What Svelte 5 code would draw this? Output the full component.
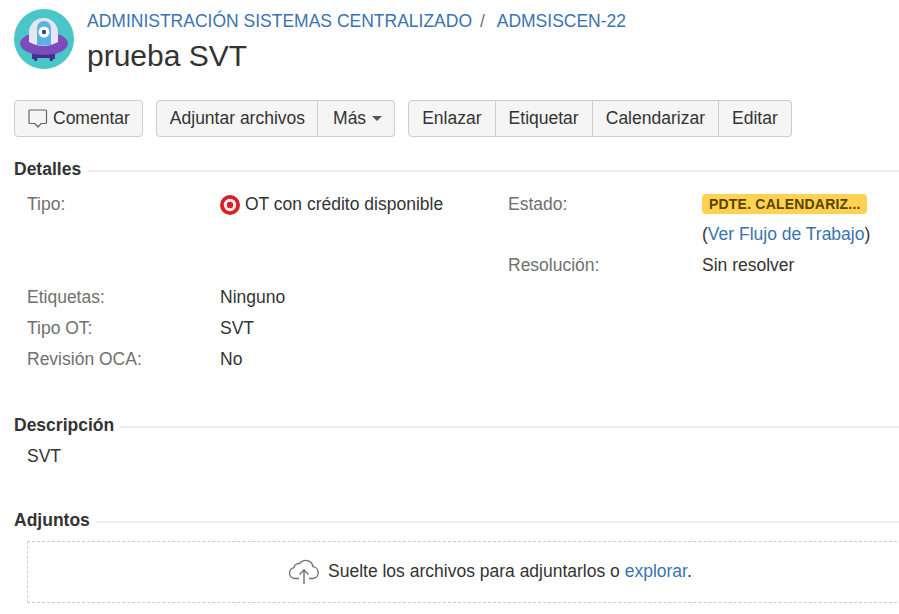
<script>
  const leftFields = [
    ['Etiquetas:', 'Ninguno'],
    ['Tipo OT:', 'SVT'],
    ['Revisión OCA:', 'No']
  ];
  const groupTwo = ['Enlazar', 'Etiquetar', 'Calendarizar', 'Editar'];
</script>

<div class="page">
  <header class="head">
    <svg class="avatar" viewBox="0 0 60 60" width="60" height="60">
      <circle cx="30" cy="30" r="30" fill="#4ac6c8" />
      <path d="M18 44h23v6h-2l-.500 2h-2.500l-.500-3h-12l-.500 3H20.500l-.500-2h-2z" fill="#3f3190" />
      <ellipse cx="30" cy="34.500" rx="24" ry="11.500" fill="#7d4bbb" />
      <path d="M15 33V23.500a14.500 14.500 0 0 1 29 0V33q-14.500 8-29 0z" fill="#e8e4f2" />
      <path d="M23 36V19a7 7 0 0 1 14 0v17q-7 1-14 0z" fill="#58b3e4" />
      <circle cx="30" cy="23" r="5.500" fill="#fff" />
      <circle cx="30" cy="23" r="2.200" fill="#2c4a8c" />
    </svg>
    <div class="titles">
      <div class="crumbs">
        <a href="#a">ADMINISTRACIÓN SISTEMAS CENTRALIZADO</a>
        <span class="sep">/</span>
        <a href="#b">ADMSISCEN-22</a>
      </div>
      <h1>prueba SVT</h1>
    </div>
  </header>

  <div class="toolbar">
    <div class="group">
      <button class="comment-btn">
        <svg viewBox="0 0 20 20" width="20" height="20">
          <path d="M2 1h15.500a1 1 0 0 1 1 1v11.500a1 1 0 0 1-1 1h-4.500l-3 3.500-3-3.500H2a1 1 0 0 1-1-1V2a1 1 0 0 1 1-1z" fill="none" stroke="#666" stroke-width="1.200" />
        </svg>
        Comentar
      </button>
    </div>
    <div class="group">
      <button class="attach-btn">Adjuntar archivos</button>
      <button class="more-btn">Más <span class="caret"></span></button>
    </div>
    <div class="group links">
      {#each groupTwo as label}
        <button>{label}</button>
      {/each}
    </div>
  </div>

  <section class="details">
    <h2><span>Detalles</span></h2>
    <div class="grid">
      <div class="label">Tipo:</div>
      <div class="value type">
        <svg viewBox="0 0 20 20" width="20" height="20">
          <circle cx="10" cy="10" r="10" fill="#d92027" />
          <circle cx="10" cy="10" r="6.200" fill="#f4f0f0" />
          <circle cx="10" cy="10" r="3.200" fill="#d92027" />
        </svg>
        OT con crédito disponible
      </div>
      <div class="label">Estado:</div>
      <div class="value"><span class="lozenge">PDTE. CALENDARIZ...</span></div>

      <div></div>
      <div></div>
      <div></div>
      <div class="value">(<a href="#c">Ver Flujo de Trabajo</a>)</div>

      <div></div>
      <div></div>
      <div class="label">Resolución:</div>
      <div class="value">Sin resolver</div>

      {#each leftFields as [label, value]}
        <div class="label">{label}</div>
        <div class="value wide">{value}</div>
      {/each}
    </div>
  </section>

  <section class="desc">
    <h2><span>Descripción</span></h2>
    <p>SVT</p>
  </section>

  <section class="attach">
    <h2><span>Adjuntos</span></h2>
    <div class="drop">
      <svg viewBox="0 0 32 28" width="32" height="28">
        <path d="M11 21.500H7a5.500 5.500 0 0 1-1-10.900 5 5 0 0 1 5.500-4 7.500 7.500 0 0 1 13.500 3 6 6 0 0 1 0 11.900h-4" fill="none" stroke="#707070" stroke-width="1.400" />
        <path d="M16 27V13M11.500 17.500 16 13l4.500 4.500" fill="none" stroke="#707070" stroke-width="1.400" />
      </svg>
      <span>Suelte los archivos para adjuntarlos o <a href="#d">explorar</a>.</span>
    </div>
  </section>
</div>

<style>
  :global(body) {
    margin: 0;
    background: #fff;
    font-family: "Liberation Sans", Arial, sans-serif;
    font-size: 17.5px;
    color: #333;
    overflow: hidden;
  }

  a {
    color: #3b73af;
    text-decoration: none;
  }

  .page {
    width: 899px;
    height: 614px;
    overflow: hidden;
    padding: 9px 0 0 14px;
    box-sizing: border-box;
  }

  .head {
    display: flex;
    gap: 13px;
    height: 60px;
  }

  .crumbs {
    font-size: 17.5px;
    line-height: 24px;
    white-space: nowrap;
  }

  .sep {
    color: #707070;
    margin: 0 8px 0 3px;
  }

  h1 {
    margin: 5px 0 0;
    font-size: 30px;
    font-weight: 400;
    line-height: 36px;
    color: #333;
  }

  .toolbar {
    display: flex;
    gap: 13px;
    margin-top: 31px;
  }

  .group {
    display: flex;
  }

  button {
    height: 37px;
    padding: 0 13px;
    font: inherit;
    color: #333;
    background: #f5f5f5;
    border: 1px solid #ccc;
    border-left-width: 0;
    display: flex;
    align-items: center;
    gap: 5px;
    white-space: nowrap;
  }

  button:first-child {
    border-left-width: 1px;
    border-radius: 4px 0 0 4px;
  }

  button:last-child {
    border-radius: 0 4px 4px 0;
  }

  button:only-child {
    border-radius: 4px;
  }

  .comment-btn {
    padding-right: 12px;
  }

  .attach-btn {
    padding-right: 12px;
  }

  .more-btn {
    padding: 0 12px 0 15px;
  }

  .links button {
    padding: 0 13.05px;
  }

  .caret {
    width: 0;
    height: 0;
    margin-left: 1px;
    border: 5px solid transparent;
    border-top-color: #555;
    border-bottom-width: 0;
  }

  h2 {
    margin: 0;
    display: flex;
    align-items: center;
    gap: 6px;
    font-size: 17.5px;
    font-weight: 700;
    line-height: 22px;
    color: #333;
  }

  h2::after {
    content: "";
    flex: 1;
    height: 2px;
    margin-top: 3px;
    background: #eee;
  }

  .details {
    margin-top: 21px;
  }

  .grid {
    display: grid;
    grid-template-columns: 193px 288px 194px 1fr;
    grid-template-rows: 30px 31px 32px 31px 31px 31px;
    padding-left: 13px;
    margin-top: 9px;
    line-height: 31px;
    white-space: nowrap;
  }

  .label {
    color: #707070;
  }

  .type {
    display: flex;
    align-items: center;
    gap: 5px;
    height: 31px;
  }

  .wide {
    grid-column: 2 / 5;
  }

  .lozenge {
    display: inline-block;
    width: 165px;
    height: 20px;
    box-sizing: border-box;
    padding-left: 7px;
    background: #ffd351;
    border-radius: 4px;
    color: #594300;
    font-size: 14px;
    font-weight: 700;
    line-height: 20px;
    letter-spacing: 0.2px;
    vertical-align: 1px;
  }

  .desc {
    margin-top: 39px;
  }

  .desc p {
    margin: 8px 0 0 13px;
    line-height: 24px;
  }

  .attach {
    margin-top: 41px;
  }

  .drop {
    margin: 10px 0 0 13px;
    width: 900px;
    height: 62px;
    box-sizing: border-box;
    border: 1px dashed #ccc;
    display: flex;
    align-items: center;
    padding: 0 0 2px 260px;
    gap: 8px;
  }
</style>
